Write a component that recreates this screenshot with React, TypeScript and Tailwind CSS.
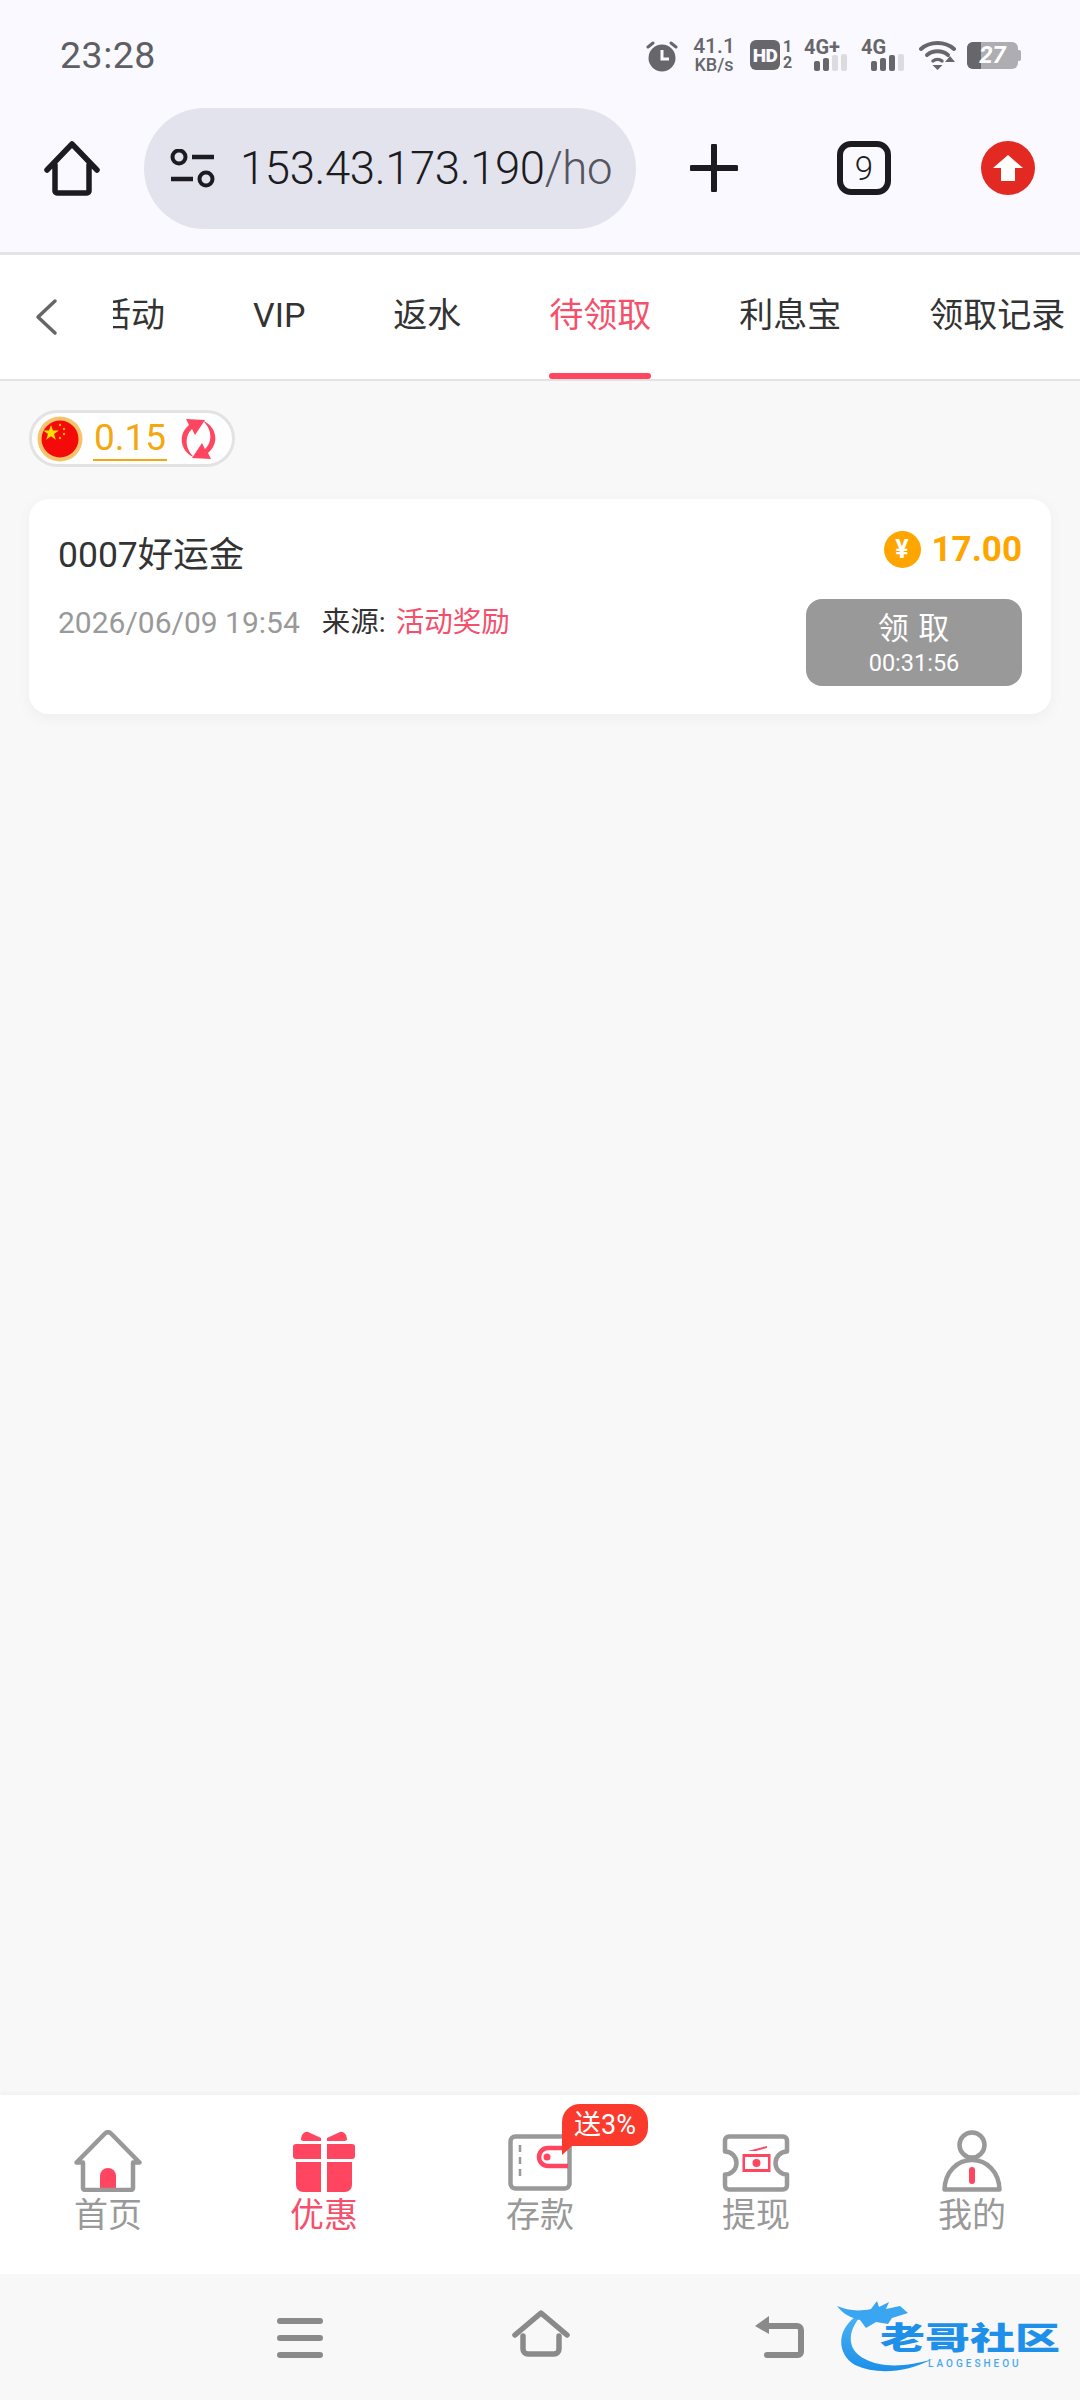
import React from "react";

const font = { fontFamily: '"Roboto", "Noto Sans CJK SC", sans-serif' };

function SignalBars({ on }: { on: number }) {
  const heights = [10, 13, 16, 17];
  return (
    <div className="flex items-end gap-[3px]">
      {heights.map((h, i) => (
        <div
          key={i}
          className={i < on ? "w-[6px] rounded-[2px] bg-[#67676b]" : "w-[6px] rounded-[2px] bg-[#dcdce0]"}
          style={{ height: h }}
        />
      ))}
    </div>
  );
}

function StatusBar() {
  return (
    <div className="flex h-[108px] items-start justify-between pl-[60px] pr-[59px] pt-[37px]">
      <span className="mt-[2px] text-[37.500px] font-normal leading-[33px] tracking-[0.5px] text-[#5f5f63]">23:28</span>
      <div className="flex items-center text-[#67676b]">
        <svg width="32" height="32" viewBox="0 0 32 32" className="mt-[1px]">
          <circle cx="16" cy="18" r="13.500" fill="#67676b" />
          <path d="M16 10v9h7" fill="none" stroke="#f9f9ff" strokeWidth="3" />
          <path d="M2 7l5-4M30 7l-5-4" stroke="#67676b" strokeWidth="3" strokeLinecap="round" />
        </svg>
        <div className="ml-[14px] flex w-[44px] flex-col items-center font-medium">
          <span className="text-[21px] leading-[19px]">41.1</span>
          <span className="text-[18px] leading-[17px]">KB/s</span>
        </div>
        <div className="ml-[14px] flex h-[30px] w-[30px] items-center justify-center rounded-[6px] bg-[#67676b] text-[19px] font-black leading-none tracking-[-0.5px] text-[#f9f9ff]">
          HD
        </div>
        <div className="ml-[2px] flex w-[11px] flex-col items-center text-[16px] font-bold leading-[16px]">
          <span>1</span>
          <span>2</span>
        </div>
        <div className="ml-[11px] flex w-[45px] flex-col">
          <span className="text-[20px] font-bold leading-[16px]">4G+</span>
          <div className="ml-[10px] mt-[-1px]">
            <SignalBars on={2} />
          </div>
        </div>
        <div className="ml-[12px] flex w-[45px] flex-col">
          <span className="text-[20px] font-bold leading-[16px]">4G</span>
          <div className="ml-[10px] mt-[-1px]">
            <SignalBars on={3} />
          </div>
        </div>
        <svg width="37" height="30" viewBox="0 0 37 30" className="ml-[13px]">
          <path d="M2 9c9-8 24-8 33 0" fill="none" stroke="#67676b" strokeWidth="4" strokeLinecap="round" />
          <path d="M8 15c6-5 15-5 21 0" fill="none" stroke="#67676b" strokeWidth="4" strokeLinecap="round" />
          <path d="M14 21c2.500-2 6.500-2 9 0" fill="none" stroke="#67676b" strokeWidth="3.500" strokeLinecap="round" />
          <path d="M18.500 30l-5-5h10zM31 16l5 6h-10z" fill="#67676b" />
        </svg>
        <div className="relative ml-[11px] flex h-[27px] w-[51px] overflow-hidden rounded-[6px] bg-[#aeaeb2]">
          <div className="h-full w-[14px] bg-[#67676b]" />
          <span className="absolute inset-0 flex items-center justify-center text-[24px] font-bold italic leading-none text-white">
            27
          </span>
        </div>
        <div className="h-[11px] w-[3px] rounded-r-[2px] bg-[#aeaeb2]" />
      </div>
    </div>
  );
}

function Toolbar() {
  return (
    <div className="flex h-[144px] items-start">
      <svg width="56" height="56" viewBox="0 0 56 56" className="ml-[44px] mt-[33px]">
        <path
          d="M3 29 L28 3 L53 29 M11 24 V50 a2 2 0 0 0 2 2 H43 a2 2 0 0 0 2 -2 V24"
          fill="none"
          stroke="#1c1b20"
          strokeWidth="5.500"
          strokeLinecap="round"
          strokeLinejoin="round"
        />
      </svg>
      <div className="ml-[44px] flex h-[121px] w-[492px] items-center rounded-full bg-[#e3e3ee] pl-[26px]">
        <svg width="46" height="40" viewBox="0 0 46 40">
          <circle cx="9" cy="8" r="6.500" fill="none" stroke="#1c1b20" strokeWidth="4" />
          <path d="M22 8h22M1 30h22" stroke="#1c1b20" strokeWidth="4.500" />
          <circle cx="36" cy="30" r="6.500" fill="none" stroke="#1c1b20" strokeWidth="4" />
        </svg>
        <span className="ml-[24px] whitespace-nowrap text-[45.500px] font-light leading-none tracking-[-0.4px] text-[#1c1b20]">
          153.43.173.190<span className="text-[#55555f]">/ho</span>
        </span>
      </div>
      <svg width="48" height="48" viewBox="0 0 48 48" className="ml-[54px] mt-[36px]">
        <path d="M24 2v44M2 24h44" stroke="#1c1b20" strokeWidth="6" strokeLinecap="round" />
      </svg>
      <div className="ml-[99px] mt-[33px] flex h-[54px] w-[54px] items-center justify-center rounded-[14px] border-[6px] border-[#1c1b20] text-[33px] font-light leading-none text-[#1c1b20]">
        9
      </div>
      <div className="ml-[90px] mt-[33px] flex h-[54px] w-[54px] items-center justify-center rounded-full bg-[#e32a22]">
        <svg width="30" height="28" viewBox="0 0 30 28">
          <path d="M15 1L30 14H22V27H8V14H0z" fill="#fff" />
        </svg>
      </div>
    </div>
  );
}

function Tabs() {
  const tabs = ["活动", "VIP", "返水", "待领取", "利息宝", "领取记录"];
  return (
    <div className="flex h-[126px] items-stretch border-b-[2px] border-[#e3e3e6] bg-white">
      <div className="flex w-[113px] shrink-0 items-center pl-[34px]">
        <svg width="24" height="38" viewBox="0 0 24 38">
          <path d="M21 3L4 19l17 16" fill="none" stroke="#666" strokeWidth="3.500" strokeLinecap="round" strokeLinejoin="round" />
        </svg>
      </div>
      <div className="flex flex-1 overflow-hidden">
        <div className="ml-[-60px] flex shrink-0">
          {tabs.map((t) => (
            <div key={t} className="relative flex items-center whitespace-nowrap px-[44px] pb-[3px]">
              <span className={t === "待领取" ? "text-[34px] text-[#f4506c]" : "text-[34px] text-[#333]"}>{t}</span>
              {t === "待领取" && (
                <div className="absolute bottom-0 left-[44px] right-[44px] h-[6px] rounded-full bg-[#ff4560]" />
              )}
            </div>
          ))}
        </div>
      </div>
    </div>
  );
}

function BalancePill() {
  return (
    <div className="flex h-[57px] w-[206px] items-center rounded-full border-[3px] border-[#e3e3e3] bg-white pl-[5px]">
      <svg width="46" height="46" viewBox="0 0 46 46">
        <circle cx="23" cy="23" r="22.500" fill="#f6c26c" />
        <circle cx="23" cy="23" r="18.500" fill="#f50a0a" />
        <path d="M14 9l1.900 5.600 5.900 0-4.800 3.500 1.800 5.600-4.800-3.500-4.800 3.500 1.800-5.600-4.800-3.500 5.900 0z" fill="#ffe100" />
        <circle cx="23" cy="9" r="1.200" fill="#ffb300" />
        <circle cx="27" cy="13" r="1.200" fill="#ffb300" />
        <circle cx="27" cy="18" r="1.200" fill="#ffb300" />
        <circle cx="23" cy="22" r="1.200" fill="#ffb300" />
      </svg>
      <span className="ml-[10px] border-b-[2px] border-[#f5a70f] px-[1px] text-[37px] font-normal leading-[42px] text-[#f5a70f]">
        0.15
      </span>
      <svg width="39" height="42" viewBox="0 0 39 42" className="ml-[12px]">
        <path d="M7 1L26 2 16 17l-3-6C6 17 5 30 15 39 3 35-3 18 10 7z" fill="#ff4560" />
        <path d="M7 1L26 2 16 17l-3-6C6 17 5 30 15 39 3 35-3 18 10 7z" fill="#ff4560" transform="rotate(180 19.500 21)" />
      </svg>
    </div>
  );
}

function RewardCard() {
  return (
    <div className="mt-[32px] flex h-[215px] justify-between rounded-[20px] bg-white pl-[29px] pr-[29px] pt-[32px] shadow-[0_4px_14px_rgba(120,90,90,0.06)]">
      <div className="pt-[2px]">
        <div className="text-[35.500px] leading-[44px] text-[#333]">0007好运金</div>
        <div className="mt-[26px] flex items-center text-[28.500px] leading-[40px]">
          <span className="text-[30px] text-[#999]">2026/06/09 19:54</span>
          <span className="ml-[22px] text-[#333]">来源:</span>
          <span className="ml-[10px] text-[#f4506c]">活动奖励</span>
        </div>
      </div>
      <div className="flex flex-col items-end">
        <div className="flex h-[36px] items-center">
          <div className="flex h-[37px] w-[37px] items-center justify-center rounded-full bg-[#ffa500] text-[25px] font-bold leading-none text-white">
            ¥
          </div>
          <span className="ml-[11px] text-[35px] font-bold leading-none text-[#ffa500]">17.00</span>
        </div>
        <button className="mt-[32px] flex h-[87px] w-[216px] flex-col items-center justify-center rounded-[16px] bg-[#999] text-white">
          <span className="text-[31px] leading-[40px] tracking-[1px]">领 取</span>
          <span className="text-[23.500px] leading-[28px]">00:31:56</span>
        </button>
      </div>
    </div>
  );
}

const G = "#999";
const P = "#ff4560";

function NavHome() {
  return (
    <svg width="68" height="62" viewBox="0 0 68 62">
      <path d="M26 60V46a8 8 0 0 1 16 0v14z" fill={P} />
      <path
        d="M2.500 32.500L31 3.500a4 4 0 0 1 6 0l28.500 29h-6.500V58a2 2 0 0 1-2 2H11a2 2 0 0 1-2-2V32.500z"
        fill="none"
        stroke={G}
        strokeWidth="4.500"
        strokeLinejoin="round"
      />
    </svg>
  );
}

function NavGift() {
  return (
    <svg width="62" height="62" viewBox="0 0 62 62">
      <path d="M8 10c0-5 3-9 7-8l13 6v3H10z" fill={P} />
      <path d="M54 10c0-5-3-9-7-8l-13 6v3h18z" fill={P} />
      <path d="M3 14h25v15H3a3 3 0 0 1-3-3v-9a3 3 0 0 1 3-3zM34 14h25a3 3 0 0 1 3 3v9a3 3 0 0 1-3 3H34z" fill={P} />
      <path d="M3 32h25v30H10a7 7 0 0 1-7-7zM34 32h25v23a7 7 0 0 1-7 7H34z" fill={P} />
    </svg>
  );
}

function NavWallet() {
  return (
    <svg width="64" height="57" viewBox="0 0 64 57" className="mb-[1px]">
      <rect x="2.500" y="2.500" width="59" height="52" rx="5" fill="none" stroke={G} strokeWidth="4.500" />
      <path d="M12 11v36" stroke={G} strokeWidth="2.500" strokeDasharray="7 5" />
      <path d="M60 14H40a8.500 8.500 0 0 0 0 18h20" fill="none" stroke={P} strokeWidth="4.500" />
      <circle cx="39" cy="23" r="3.500" fill={P} />
    </svg>
  );
}

function NavWithdraw() {
  return (
    <svg width="68" height="58" viewBox="0 0 68 58">
      <path
        d="M7 2.500h54a4 4 0 0 1 4 4v11a11.500 11.500 0 0 0 0 23v11a4 4 0 0 1-4 4H7a4 4 0 0 1-4-4v-11a11.500 11.500 0 0 0 0-23v-11a4 4 0 0 1 4-4z"
        fill="none"
        stroke={G}
        strokeWidth="4.500"
        strokeLinejoin="round"
      />
      <path d="M26 17l19-5v2l-11 3z" fill={P} />
      <rect x="20.500" y="20" width="28" height="18" fill={P} />
      <rect x="23" y="23" width="23" height="12" fill="#fff" />
      <circle cx="34.500" cy="29" r="4" fill={P} />
    </svg>
  );
}

function NavUser() {
  return (
    <svg width="60" height="62" viewBox="0 0 60 62">
      <circle cx="30" cy="15" r="12.500" fill="none" stroke={G} strokeWidth="4.500" />
      <path d="M2.500 59.500C3 42 15 30 30 30s27 12 27.500 29.500z" fill="none" stroke={G} strokeWidth="4.500" strokeLinejoin="round" />
      <rect x="27" y="37" width="6" height="17" rx="3" fill={P} />
    </svg>
  );
}

function BottomNav() {
  const items = [
    { label: "首页", icon: <NavHome /> },
    { label: "优惠", icon: <NavGift />, active: true },
    { label: "存款", icon: <NavWallet />, badge: true },
    { label: "提现", icon: <NavWithdraw /> },
    { label: "我的", icon: <NavUser /> },
  ];
  return (
    <div className="grid h-[179px] grid-cols-5 bg-white pt-[34px] shadow-[0_-2px_4px_rgba(0,0,0,0.04)]">
      {items.map((item) => (
        <div key={item.label} className="relative flex flex-col items-center">
          <div className="flex h-[63px] items-end">{item.icon}</div>
          <span className={item.active ? "mt-[5px] text-[34px] leading-[36px] text-[#f4506c]" : "mt-[5px] text-[34px] leading-[36px] text-[#999]"}>
            {item.label}
          </span>
          {item.badge && (
            <div className="absolute left-[130px] top-[-25px] flex h-[42px] w-[86px] items-center justify-center rounded-[18px] rounded-bl-none bg-[#fb3a2e] text-[27px] leading-none text-white">
              送3%
              <svg width="10" height="9" viewBox="0 0 10 9" className="absolute left-0 top-full">
                <path d="M0 0V9L10 0z" fill="#fb3a2e" />
              </svg>
            </div>
          )}
        </div>
      ))}
    </div>
  );
}

function SystemNav() {
  return (
    <div className="relative flex h-[126px] items-start bg-[#f8f8f8] pt-[44px]">
      <svg width="46" height="40" viewBox="0 0 46 40" className="ml-[277px]">
        <path d="M3 3h40M3 20h40M3 37h40" stroke="#8a8a8a" strokeWidth="6" strokeLinecap="round" />
      </svg>
      <svg width="58" height="48" viewBox="0 0 58 48" className="ml-[189px] mt-[-8px]">
        <path d="M3 25L29 3l26 22" fill="none" stroke="#8a8a8a" strokeWidth="5.500" strokeLinecap="round" strokeLinejoin="round" />
        <path d="M11 26v13a5 5 0 0 0 5 5h26a5 5 0 0 0 5-5V26" fill="none" stroke="#8a8a8a" strokeWidth="5.500" strokeLinecap="round" />
      </svg>
      <svg width="52" height="46" viewBox="0 0 52 46" className="ml-[183px] mt-[-4px]">
        <path d="M14 12h30a4 4 0 0 1 4 4v22a3 3 0 0 1-3 3H14" fill="none" stroke="#8a8a8a" strokeWidth="6" strokeLinecap="round" strokeLinejoin="round" />
        <path d="M16 2L2 12l14 8z" fill="#8a8a8a" />
      </svg>
      {/* watermark logo */}
      <div className="absolute left-[835px] top-[24px] h-[80px] w-[232px]">
        <svg width="232" height="80" viewBox="0 0 232 80" className="absolute inset-0">
          <defs>
            <linearGradient id="ring" x1="0" y1="0" x2="0" y2="1">
              <stop offset="0" stopColor="#4fb6f5" />
              <stop offset="1" stopColor="#1c8fe9" />
            </linearGradient>
          </defs>
          <path d="M30 14C6 22-4 52 20 67c22 10 50 8 78-6-26 8-52 9-68 0C10 52 12 30 30 14z" fill="url(#ring)" />
          <path d="M2 8c10 4 20 6 34 3l6-8 2 6 10-5-3 7 14-3 8 7-16 5-4 6-12-2-10 6-6-8C16 20 8 16 2 8z" fill="#3aa6f2" />
        </svg>
        <span className="absolute left-[45px] top-[27px] origin-center scale-y-[0.68] whitespace-nowrap text-[45px] font-black leading-[28px] text-[#1e90ea]">
          老哥社区
        </span>
        <span className="absolute left-[93px] top-[61px] whitespace-nowrap text-[10px] font-medium leading-[10px] tracking-[3px] text-[#4aa8ee]">
          LAOGESHEOU
        </span>
      </div>
    </div>
  );
}

export default function App() {
  return (
    <div className="flex h-[2400px] w-[1080px] flex-col overflow-hidden bg-[#f8f8f8]" style={font}>
      <div className="border-b-[3px] border-[#e3e3e8] bg-[#f9f9ff]">
        <StatusBar />
        <Toolbar />
      </div>
      <Tabs />
      <main className="flex-1 px-[29px] pt-[29px]">
        <BalancePill />
        <RewardCard />
      </main>
      <BottomNav />
      <SystemNav />
    </div>
  );
}
